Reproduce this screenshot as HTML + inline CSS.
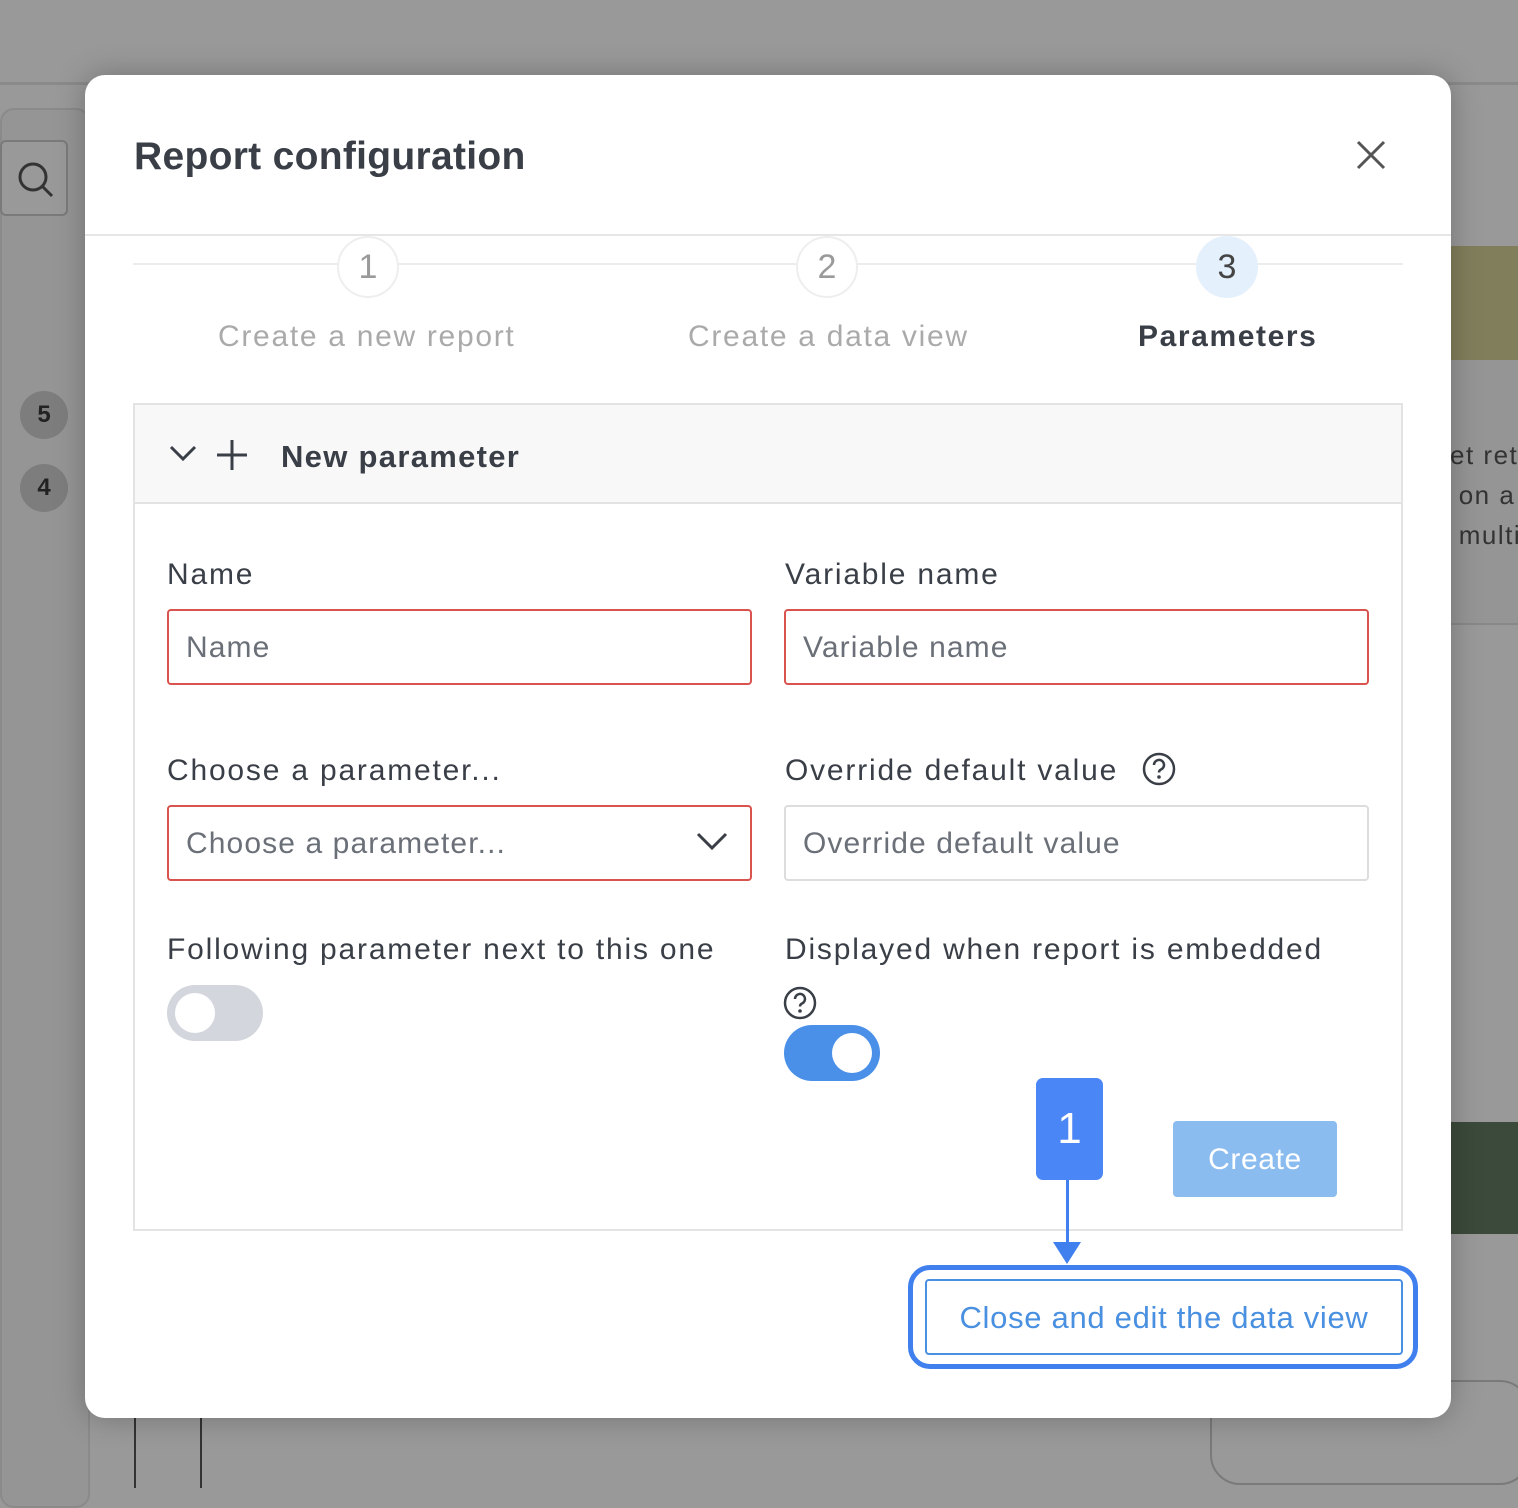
<!DOCTYPE html>
<html><head><meta charset="utf-8"><style>
*{box-sizing:border-box;margin:0;padding:0}
body{width:1518px;height:1488px;background:#999;position:relative;overflow:hidden;font-family:"Liberation Sans",sans-serif;color:#3a3f47}
.a{position:absolute}
.modal{left:85px;top:75px;width:1366px;height:1343px;background:#fff;border-radius:20px;box-shadow:0 0 30px rgba(0,0,0,.25)}
.lbl{font-size:30px;color:#3a3f47;letter-spacing:1.8px;white-space:nowrap}
.inp{height:76px;border:2px solid #d9534f;border-radius:4px;font-size:30px;color:#6b7078;padding:20px 17px;letter-spacing:1.1px;white-space:nowrap}
.circ{width:62px;height:62px;border-radius:50%;border:2px solid #eee;background:#fff;font-size:34px;color:#9a9a9a;text-align:center;line-height:58px}
</style></head><body>
<div class="a" style="left:0;top:82px;width:1518px;height:3px;background:#8a8a8a"></div>
<div class="a" style="left:0;top:108px;width:90px;height:1400px;border:2px solid #8a8a8a;border-radius:14px;background:#959595"></div>
<div class="a" style="left:0;top:140px;width:68px;height:76px;border:2px solid #7a7a7a;border-radius:6px;background:#999"></div>
<svg class="a" style="left:16px;top:160px" width="40" height="40"><circle cx="17" cy="17" r="13" fill="none" stroke="#333" stroke-width="3"/><line x1="26" y1="26" x2="36" y2="36" stroke="#333" stroke-width="3"/></svg>
<div class="a" style="left:20px;top:391px;width:48px;height:48px;border-radius:50%;background:#7d7d7d;font-weight:bold;font-size:24px;text-align:center;line-height:48px;color:#222">5</div>
<div class="a" style="left:20px;top:464px;width:48px;height:48px;border-radius:50%;background:#7d7d7d;font-weight:bold;font-size:24px;text-align:center;line-height:48px;color:#222">4</div>
<div class="a" style="left:1440px;top:246px;width:78px;height:114px;background:#807e5b"></div>
<div class="a" style="left:1440px;top:360px;width:78px;height:265px;background:#959595;border-bottom:2px solid #888"></div>
<div class="a" style="left:1450px;top:435px;font-size:26px;color:#333;line-height:40px;letter-spacing:1.5px">et ret<br>&nbsp;on a<br>&nbsp;multi</div>
<div class="a" style="left:1440px;top:1122px;width:78px;height:112px;background:#3b4a3a"></div>
<div class="a" style="left:1210px;top:1380px;width:320px;height:105px;border:2px solid #7a7a7a;border-radius:30px"></div>
<div class="a" style="left:134px;top:1418px;width:68px;height:70px;border-left:2px solid #333;border-right:2px solid #333"></div>

<div class="a modal">
 <div class="a" style="left:49px;top:60px;font-size:39px;font-weight:bold;color:#3a3f47;letter-spacing:.3px">Report configuration</div>
 <svg class="a" style="left:1270px;top:64px" width="32" height="32"><path d="M3 3L29 29M29 3L3 29" stroke="#555" stroke-width="3"/></svg>
 <div class="a" style="left:0;top:159px;width:1366px;height:2px;background:#e6e6e6"></div>
 <div class="a" style="left:48px;top:188px;width:1270px;height:2px;background:#ececec"></div>
 <div class="a circ" style="left:252px;top:161px">1</div>
 <div class="a circ" style="left:711px;top:161px">2</div>
 <div class="a circ" style="left:1111px;top:161px;background:#e4f0fb;border-color:#e4f0fb;color:#444">3</div>
 <div class="a" style="left:133px;top:245px;font-size:30px;color:#aaa;letter-spacing:1.7px;white-space:nowrap">Create a new report</div>
 <div class="a" style="left:603px;top:245px;font-size:30px;color:#aaa;letter-spacing:1.7px;white-space:nowrap">Create a data view</div>
 <div class="a" style="left:1053px;top:245px;font-size:30px;font-weight:bold;color:#3a3f47;letter-spacing:1.6px">Parameters</div>

 <div class="a" style="left:48px;top:328px;width:1270px;height:828px;border:2px solid #e3e3e3">
  <div class="a" style="left:0;top:0;width:1266px;height:99px;background:#f8f8f8;border-bottom:2px solid #e3e3e3"></div>
  <svg class="a" style="left:33px;top:37px" width="32" height="24"><path d="M3 5L15 17L27 5" fill="none" stroke="#3a3f47" stroke-width="3"/></svg>
  <svg class="a" style="left:80px;top:33px" width="34" height="34"><path d="M17 2V32M2 17H32" stroke="#3a3f47" stroke-width="3"/></svg>
  <div class="a" style="left:146px;top:34px;font-size:31px;font-weight:bold;color:#3a3f47;letter-spacing:1.3px">New parameter</div>

  <div class="a lbl" style="left:32px;top:153px">Name</div>
  <div class="a lbl" style="left:650px;top:153px">Variable name</div>
  <div class="a inp" style="left:32px;top:204px;width:585px">Name</div>
  <div class="a inp" style="left:649px;top:204px;width:585px">Variable name</div>

  <div class="a lbl" style="left:32px;top:349px">Choose a parameter...</div>
  <div class="a lbl" style="left:650px;top:349px">Override default value</div>
  <svg class="a" style="left:1006px;top:346px" width="36" height="36"><circle cx="18" cy="18" r="15" fill="none" stroke="#3a3f47" stroke-width="2.5"/><path d="M13 14a5 5 0 1 1 7 4.5c-1.5.7-2 1.5-2 3" fill="none" stroke="#3a3f47" stroke-width="2.5"/><circle cx="18" cy="26" r="1.8" fill="#3a3f47"/></svg>
  <div class="a inp" style="left:32px;top:400px;width:585px">Choose a parameter...</div>
  <svg class="a" style="left:560px;top:426px" width="34" height="22"><path d="M3 3L17 17L31 3" fill="none" stroke="#3a3f47" stroke-width="3"/></svg>
  <div class="a inp" style="left:649px;top:400px;width:585px;border-color:#ddd">Override default value</div>

  <div class="a lbl" style="left:32px;top:528px">Following parameter next to this one</div>
  <div class="a lbl" style="left:650px;top:528px">Displayed when report is embedded</div>
  <div class="a" style="left:32px;top:580px;width:96px;height:56px;border-radius:28px;background:#d3d6dc"><div class="a" style="left:8px;top:8px;width:40px;height:40px;border-radius:50%;background:#fff"></div></div>
  <svg class="a" style="left:647px;top:580px" width="36" height="36"><circle cx="18" cy="18" r="15" fill="none" stroke="#3a3f47" stroke-width="2.5"/><path d="M13 14a5 5 0 1 1 7 4.5c-1.5.7-2 1.5-2 3" fill="none" stroke="#3a3f47" stroke-width="2.5"/><circle cx="18" cy="26" r="1.8" fill="#3a3f47"/></svg>
  <div class="a" style="left:649px;top:620px;width:96px;height:56px;border-radius:28px;background:#4a90e8"><div class="a" style="left:48px;top:8px;width:40px;height:40px;border-radius:50%;background:#fff"></div></div>

  <div class="a" style="left:1038px;top:716px;width:164px;height:76px;border-radius:4px;background:#8bbcf0;color:#fff;font-size:30px;text-align:center;line-height:78px;letter-spacing:.6px">Create</div>
 </div>
</div>

<div class="a" style="left:1036px;top:1078px;width:67px;height:102px;border-radius:7px;background:#4a86f5;color:#fff;font-size:44px;text-align:center;line-height:102px">1</div>
<div class="a" style="left:1066px;top:1180px;width:3px;height:68px;background:#3f7fee"></div>
<svg class="a" style="left:1053px;top:1242px" width="28" height="24"><path d="M0 0H28L14 22Z" fill="#3f7fee"/></svg>
<div class="a" style="left:908px;top:1265px;width:510px;height:104px;border:5px solid #3f7fee;border-radius:22px"></div>
<div class="a" style="left:925px;top:1279px;width:478px;height:76px;border:2px solid #4a90e0;border-radius:4px;color:#4a90e0;font-size:31px;text-align:center;line-height:74px;letter-spacing:.7px;white-space:nowrap">Close and edit the data view</div>
</body></html>
